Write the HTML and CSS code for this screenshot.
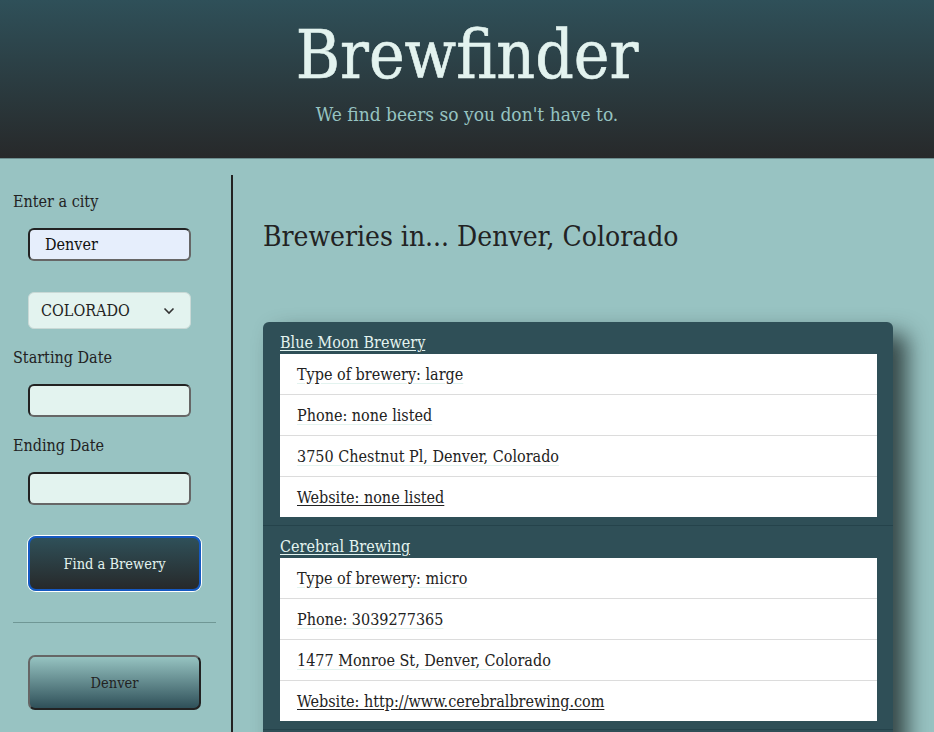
FILE: index.html
```html
<!DOCTYPE html>
<html lang="en">
<head>
<meta charset="utf-8">
<title>Brewfinder</title>
<link rel="stylesheet" href="styles.css">
</head>
<body>
<header class="hero">
  <h1 class="hero-title">Brewfinder</h1>
  <p class="hero-sub">We find beers so you don't have to.</p>
</header>
<div class="layout">
  <aside class="sidebar">
    <label class="field-label">Enter a city</label>
    <input class="text-input city-input" type="text" value="Denver">
    <div class="select-wrap">
      <select class="state-select"><option>COLORADO</option></select>
      <svg class="chev" width="12" height="8" viewBox="0 0 12 8"><path d="M1.5 1.5 L6 6 L10.5 1.5" fill="none" stroke="#333" stroke-width="1.6"/></svg>
    </div>
    <label class="field-label">Starting Date</label>
    <input class="text-input" type="text">
    <label class="field-label label-gap">Ending Date</label>
    <input class="text-input" type="text">
    <button class="find-btn">Find a Brewery</button>
    <hr class="divider">
    <button class="history-btn">Denver</button>
  </aside>
  <main class="content">
    <h2 class="results-title">Breweries in... Denver, Colorado</h2>
    <div class="card">
      <section class="brewery">
        <a class="brewery-name" href="#">Blue Moon Brewery</a>
        <ul class="info">
          <li><span class="info-text">Type of brewery: large</span></li>
          <li><span class="info-text">Phone: none listed</span></li>
          <li><span class="info-text">3750 Chestnut Pl, Denver, Colorado</span></li>
          <li><a class="info-link" href="#">Website: none listed</a></li>
        </ul>
      </section>
      <section class="brewery">
        <a class="brewery-name" href="#">Cerebral Brewing</a>
        <ul class="info">
          <li><span class="info-text">Type of brewery: micro</span></li>
          <li><span class="info-text">Phone: 3039277365</span></li>
          <li><span class="info-text">1477 Monroe St, Denver, Colorado</span></li>
          <li><a class="info-link" href="#">Website: http://www.cerebralbrewing.com</a></li>
        </ul>
      </section>
    </div>
  </main>
</div>
</body>
</html>
```

FILE: styles.css
```css
* { box-sizing: border-box; }
html, body { margin: 0; padding: 0; }
body {
  background: #98c3c2;
  font-family: "DejaVu Serif Condensed", "DejaVu Serif", serif;
  font-stretch: condensed;
  color: #222;
  height: 732px;
  overflow: hidden;
}
.hero {
  height: 159px;
  background: linear-gradient(#2f5059, #27292a);
  text-align: center;
  padding-top: 17px;
  border-bottom: 1px solid #6d8e8f;
}
.hero-title {
  margin: 0;
  font-weight: 400;
  font-size: 67px;
  line-height: 76px;
  color: #e3f3ef;
  -webkit-text-stroke: 0.6px #e3f3ef;
}
.hero-sub {
  margin: 10px 0 0;
  font-size: 19px;
  line-height: 22px;
  color: #96c3c1;
}
.layout {
  display: flex;
  align-items: flex-start;
}
.sidebar {
  width: 233px;
  flex: none;
  margin-top: 16px;
  padding: 17px 15px 40px 13px;
  border-right: 2px solid #222;
  display: flex;
  flex-direction: column;
  height: 620px;
}
.field-label {
  font-size: 16px;
  line-height: 19px;
}
.text-input {
  margin: 17px 0 0 15px;
  width: 163px;
  height: 33px;
  border: 2px solid #222;
  border-right-color: #666;
  border-bottom-color: #666;
  border-radius: 6px;
  background: #e3f3ef;
  font-family: inherit;
  font-stretch: condensed;
  font-size: 16px;
  padding: 0 0 0 15px;
  color: #111;
  outline: none;
}
.city-input { background: #e6eefc; }
.text-input + .field-label { margin-top: 18px; }
.text-input + .label-gap { margin-top: 19px; }
.select-wrap {
  position: relative;
  margin: 31px 0 19px 15px;
  width: 163px;
  height: 37px;
}
.state-select {
  display: block;
  -webkit-appearance: none;
  appearance: none;
  width: 163px;
  height: 37px;
  border: 1px solid #c9d9d6;
  border-radius: 6px;
  background: #e3f3ef;
  font-family: inherit;
  font-stretch: condensed;
  font-size: 16px;
  color: #222;
  padding: 0 0 0 12px;
}
.chev { position: absolute; right: 16px; top: 15px; pointer-events: none; }
.find-btn {
  margin: 31px 0 0 15px;
  width: 173px;
  height: 55px;
  border: 2px solid #1559c2;
  box-shadow: 0 0 0 1px #fff;
  border-radius: 8px;
  background: linear-gradient(#2f5059, #27292a);
  color: #e3f3ef;
  font-family: inherit;
  font-stretch: condensed;
  font-size: 14.5px;
}
.divider {
  margin: 31px 0 0 0;
  border: 0;
  border-top: 1px solid #6f9795;
  width: 203px;
}
.history-btn {
  margin: 32px 0 0 15px;
  width: 173px;
  height: 55px;
  border: 2px solid #222;
  border-left-color: #666;
  border-top-color: #666;
  border-radius: 7px;
  background: linear-gradient(#96c3c1, #2f5059);
  color: #222;
  font-family: inherit;
  font-stretch: condensed;
  font-size: 14.5px;
}
.content {
  flex: 1;
  padding: 61px 41px 0 30px;
}
.results-title {
  margin: 0;
  font-weight: 400;
  font-size: 28px;
  line-height: 34px;
  color: #222;
}
.card {
  margin-top: 68px;
  background: #2f4f57;
  border-radius: 6px;
  box-shadow: 14px 12px 22px rgba(20, 30, 30, 0.75);
  height: 500px;
}
.brewery {
  padding: 11px 16px 8px 17px;
  border-bottom: 1px solid #25434b;
}
.brewery-name {
  display: block;
  color: #e3f3ef;
  font-size: 16px;
  line-height: 19px;
  margin-bottom: 2px;
  text-underline-offset: 2px;
}
.info {
  list-style: none;
  margin: 0;
  padding: 0;
  background: #fff;
}
.info li {
  height: 41px;
  padding: 0 17px;
  display: flex;
  align-items: center;
  border-top: 1px solid #dcdcdc;
  font-size: 16px;
}
.info li:first-child { border-top: 0; height: 40px; }
.info-text {
  text-decoration: underline;
  text-decoration-color: #e3f3ef;
  text-underline-offset: 3px;
}
.info-link {
  color: #222;
  text-underline-offset: 2px;
}
```
